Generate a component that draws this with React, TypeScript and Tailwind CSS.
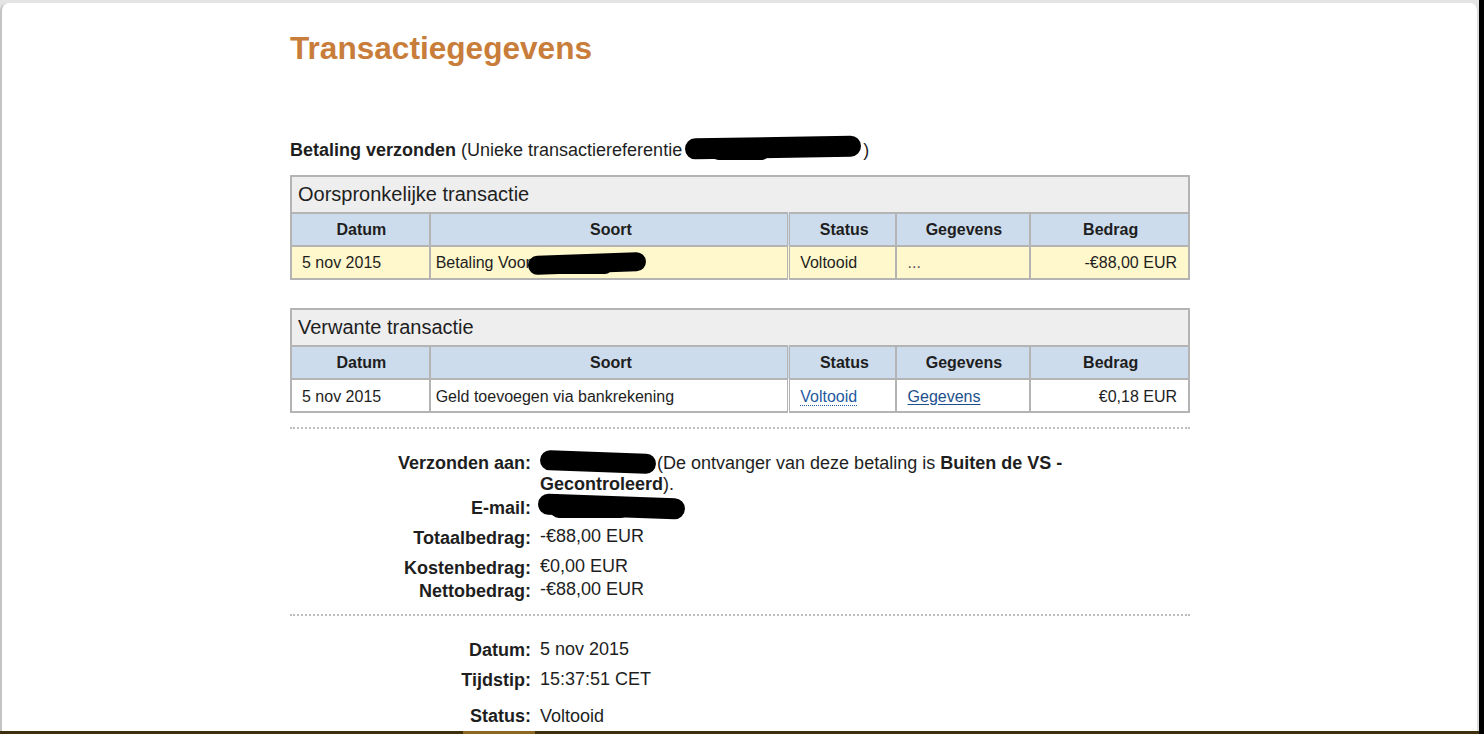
import React from "react";

const Pill = ({ className }: { className: string }) => (
  <span className={"absolute bg-black rounded-full " + className} />
);

export default function App() {
  const font = { fontFamily: '"Liberation Sans", Arial, Helvetica, sans-serif' };
  return (
    <div className="w-[1484px] h-[734px] bg-black flex overflow-hidden" style={font}>
      <div className="w-[1479px] flex flex-col bg-[#e4e4e4]">
        <div className="flex-1 mt-[3px] bg-white rounded-t-[8px] border-l-2 border-r-2 border-[#c4c4c4] border-r-[#dcdcdc] overflow-hidden">
          <div className="w-[900px] ml-[288px] text-[#1e1e1e]">
            <h1 className="mt-[27px] text-[31.6px] leading-[37px] font-bold text-[#c97d3a]">
              Transactiegegevens
            </h1>

            <div className="mt-[73px] text-[18px] leading-[20px] relative">
              <span className="font-bold">Betaling verzonden</span> (Unieke transactiereferentie
              <span className="inline-block w-[181px]" />)
              <Pill className="left-[395px] top-[-3px] w-[176px] h-[21px] rotate-[-1deg]" />
              <Pill className="left-[420px] top-[3px] w-[60px] h-[17px]" />
            </div>

            <table className="mt-[15px] w-[900px] border-collapse text-[16px]">
              <colgroup>
                <col className="w-[139px]" />
                <col className="w-[360px]" />
                <col className="w-[107px]" />
                <col className="w-[135px]" />
                <col className="w-[159px]" />
              </colgroup>
              <tbody>
                <tr className="h-[37px] bg-[#eeeeee]">
                  <td colSpan={5} className="border-2 border-[#b4b4b4] px-[6px] pb-[2px] text-[20px] leading-[24px]">
                    Oorspronkelijke transactie
                  </td>
                </tr>
                <tr className="h-[33px] bg-[#cddcec] font-bold text-center">
                  <td className="border-2 border-[#b4b4b4] pl-[2px]">Datum</td>
                  <td className="border-2 border-[#b4b4b4] pl-[4px]">Soort</td>
                  <td className="border-2 border-[#b4b4b4] border-l-[3px] border-l-[#b4b4b4] border-double pl-[4px]">Status</td>
                  <td className="border-2 border-[#b4b4b4] pl-[2px]">Gegevens</td>
                  <td className="border-2 border-[#b4b4b4] pl-[2px]">Bedrag</td>
                </tr>
                <tr className="h-[33px] bg-[#fff8cc]">
                  <td className="border-2 border-[#b4b4b4] pl-[10px]">5 nov 2015</td>
                  <td className="border-2 border-[#b4b4b4] pl-[5px]">
                    <span className="relative">
                      Betaling Voor
                      <Pill className="left-[92px] top-[0px] w-[118px] h-[19px] rotate-[-2deg]" />
                      <Pill className="left-[96px] top-[6px] w-[80px] h-[14px]" />
                    </span>
                  </td>
                  <td className="border-2 border-[#b4b4b4] border-l-[3px] border-l-[#b4b4b4] border-double pl-[10px]">Voltooid</td>
                  <td className="border-2 border-[#b4b4b4] pl-[11px] text-[#555]">...</td>
                  <td className="border-2 border-[#b4b4b4] pr-[11px] text-right">-€88,00 EUR</td>
                </tr>
              </tbody>
            </table>

            <table className="mt-[28px] w-[900px] border-collapse text-[16px]">
              <colgroup>
                <col className="w-[139px]" />
                <col className="w-[360px]" />
                <col className="w-[107px]" />
                <col className="w-[135px]" />
                <col className="w-[159px]" />
              </colgroup>
              <tbody>
                <tr className="h-[37px] bg-[#eeeeee]">
                  <td colSpan={5} className="border-2 border-[#b4b4b4] px-[6px] pb-[2px] text-[20px] leading-[24px]">
                    Verwante transactie
                  </td>
                </tr>
                <tr className="h-[33px] bg-[#cddcec] font-bold text-center">
                  <td className="border-2 border-[#b4b4b4] pl-[2px]">Datum</td>
                  <td className="border-2 border-[#b4b4b4] pl-[4px]">Soort</td>
                  <td className="border-2 border-[#b4b4b4] border-l-[3px] border-l-[#b4b4b4] border-double pl-[4px]">Status</td>
                  <td className="border-2 border-[#b4b4b4] pl-[2px]">Gegevens</td>
                  <td className="border-2 border-[#b4b4b4] pl-[2px]">Bedrag</td>
                </tr>
                <tr className="h-[33px] bg-white">
                  <td className="border-2 border-[#b4b4b4] pl-[10px] pt-[2px]">5 nov 2015</td>
                  <td className="border-2 border-[#b4b4b4] pl-[5px] pt-[2px]">Geld toevoegen via bankrekening</td>
                  <td className="border-2 border-[#b4b4b4] border-l-[3px] border-l-[#b4b4b4] border-double pl-[10px] pt-[2px]">
                    <span className="text-[#1d5aa0] border-b border-dotted border-[#1d5aa0]">Voltooid</span>
                  </td>
                  <td className="border-2 border-[#b4b4b4] pl-[11px] pt-[2px]">
                    <span className="text-[#1d4f8c] underline underline-offset-2">Gegevens</span>
                  </td>
                  <td className="border-2 border-[#b4b4b4] pr-[11px] pt-[2px] text-right">€0,18 EUR</td>
                </tr>
              </tbody>
            </table>

            <div className="mt-[14px] border-t-2 border-dotted border-[#bdbdbd]" />

            <div className="text-[18px]">
              <div className="mt-[24px] flex leading-[21px]">
                <div className="w-[241px] text-right font-bold shrink-0">Verzonden aan:</div>
                <div className="ml-[9px] relative">
                  <span className="inline-block w-[117px]" />(De ontvanger van deze betaling is <b>Buiten de VS -</b>
                  <br />
                  <b>Gecontroleerd</b>).
                  <Pill className="left-[0px] top-[-1px] w-[116px] h-[20px] rotate-[2deg]" />
                </div>
              </div>
              <div className="mt-[2px] flex leading-[22px]">
                <div className="w-[241px] text-right font-bold shrink-0">E-mail:</div>
                <div className="ml-[9px] relative h-[22px] w-[150px]">
                  <Pill className="left-[-2px] top-[-1px] w-[147px] h-[21px] rotate-[2deg]" />
                  <Pill className="left-[10px] top-[3px] w-[80px] h-[18px]" />
                </div>
              </div>
              <div className="mt-[8px] flex leading-[22px]">
                <div className="w-[241px] text-right font-bold shrink-0">Totaalbedrag:</div>
                <div className="ml-[9px] -translate-y-[2px]">-€88,00 EUR</div>
              </div>
              <div className="mt-[8px] flex leading-[22px]">
                <div className="w-[241px] text-right font-bold shrink-0">Kostenbedrag:</div>
                <div className="ml-[9px] -translate-y-[2px]">€0,00 EUR</div>
              </div>
              <div className="mt-[1px] flex leading-[22px]">
                <div className="w-[241px] text-right font-bold shrink-0">Nettobedrag:</div>
                <div className="ml-[9px] -translate-y-[2px]">-€88,00 EUR</div>
              </div>

              <div className="mt-[12px] border-t-2 border-dotted border-[#bdbdbd]" />

              <div className="mt-[23px] flex leading-[22px]">
                <div className="w-[241px] text-right font-bold shrink-0">Datum:</div>
                <div className="ml-[9px] -translate-y-[1px]">5 nov 2015</div>
              </div>
              <div className="mt-[8px] flex leading-[22px]">
                <div className="w-[241px] text-right font-bold shrink-0">Tijdstip:</div>
                <div className="ml-[9px] -translate-y-[1px]">15:37:51 CET</div>
              </div>
              <div className="mt-[14px] flex leading-[22px]">
                <div className="w-[241px] text-right font-bold shrink-0">Status:</div>
                <div className="ml-[9px]">Voltooid</div>
              </div>
            </div>
          </div>
        </div>
        <div className="h-[3px] bg-[#3f300d] flex">
          <div className="ml-[463px] w-[72px] bg-[#8a6822]" />
        </div>
      </div>
      <div className="w-[5px] bg-black" />
    </div>
  );
}
